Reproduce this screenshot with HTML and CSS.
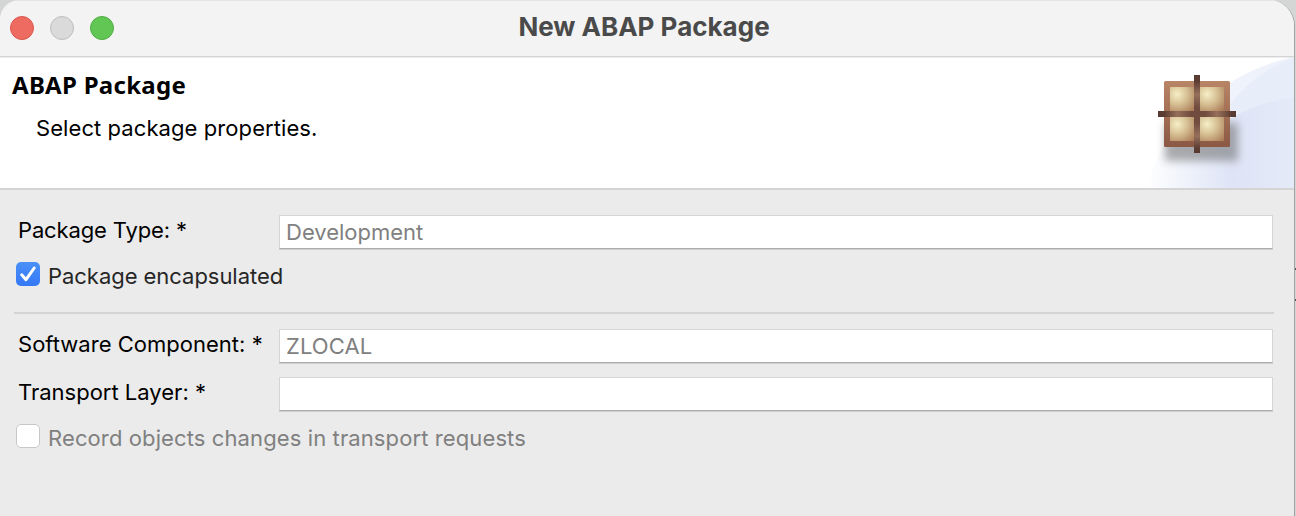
FILE: index.html
```html
<!DOCTYPE html>
<html lang="en">
<head>
<meta charset="utf-8">
<title>New ABAP Package</title>
<link rel="stylesheet" href="styles.css">
</head>
<body>
<div class="backdrop">
<div class="window">
  <header class="titlebar">
    <div class="lights"><i class="light close"></i><i class="light minimize"></i><i class="light maximize"></i></div>
    <h1 class="title">New ABAP Package</h1>
  </header>
  <section class="banner">
    <div class="intro">
      <h2 class="heading">ABAP Package</h2>
      <p class="message">Select package properties.</p>
    </div>
    <svg class="art" width="164" height="130" viewBox="0 1 164 130">
      <defs>
        <linearGradient id="sweep" x1="0" x2="1" y1="0" y2="0"><stop offset="0" stop-color="#fff"/><stop offset=".58" stop-color="#dee4f6"/><stop offset="1" stop-color="#e5eaf8"/></linearGradient>
        <linearGradient id="sky" x1="0" x2="1" y1="0" y2="0"><stop offset="0" stop-color="#f4f6fc"/><stop offset="1" stop-color="#edf1fb"/></linearGradient>
        <linearGradient id="frame" x1="0" x2="0" y1="0" y2="1"><stop offset="0" stop-color="#b88566"/><stop offset="1" stop-color="#8b5844"/></linearGradient>
        <radialGradient id="pane" cx=".3" cy=".3" r=".9"><stop offset="0" stop-color="#f6efc7"/><stop offset=".45" stop-color="#d8c296"/><stop offset="1" stop-color="#ad805b"/></radialGradient>
        <linearGradient id="strapX" gradientUnits="userSpaceOnUse" x1="28" x2="106" y1="0" y2="0"><stop offset="0" stop-color="#563a30"/><stop offset=".08" stop-color="#5c3d32"/><stop offset=".25" stop-color="#956f5a"/><stop offset=".42" stop-color="#704b3e"/><stop offset=".6" stop-color="#704b3e"/><stop offset=".76" stop-color="#956f5a"/><stop offset=".94" stop-color="#5c3d32"/><stop offset="1" stop-color="#563a30"/></linearGradient>
        <linearGradient id="strapY" gradientUnits="userSpaceOnUse" x1="0" x2="0" y1="18" y2="96"><stop offset="0" stop-color="#563a30"/><stop offset=".08" stop-color="#5c3d32"/><stop offset=".25" stop-color="#956f5a"/><stop offset=".42" stop-color="#704b3e"/><stop offset=".6" stop-color="#704b3e"/><stop offset=".78" stop-color="#956f5a"/><stop offset=".94" stop-color="#5c3d32"/><stop offset="1" stop-color="#563a30"/></linearGradient>
        <filter id="blur" x="-30%" y="-30%" width="160%" height="160%"><feGaussianBlur stdDeviation="4"/></filter>
      </defs>
      <path fill="url(#sky)" d="M16 131C34 72 88 16 164 0V131Z"/>
      <path fill="#e8edfa" d="M92 60C106 34 134 11 164 1V60Z"/>
      <path fill="url(#sweep)" d="M16 131C24 106 34 82 52 66L100 62C120 50 142 43 164 41V131Z"/>
      <path fill="#6c6c6c" opacity=".55" filter="url(#blur)" d="M35 66H108V104H35Z"/>
      <rect x="34" y="24" width="66" height="66" rx="1.5" fill="url(#frame)"/>
      <g fill="url(#pane)"><rect x="40" y="30" width="24" height="24"/><rect x="70" y="30" width="24" height="24"/><rect x="40" y="60" width="24" height="24"/><rect x="70" y="60" width="24" height="24"/></g>
      <rect x="28" y="54" width="78" height="6" fill="url(#strapX)"/>
      <rect x="64" y="18" width="6" height="78" fill="url(#strapY)"/>
    </svg>
  </section>
  <main class="form">
    <div class="row"><span class="label type">Package Type: *</span><div class="field"><span class="dev">Development</span></div></div>
    <div class="check first"><span class="box checked"><svg width="24" height="24" viewBox="0 0 24 24"><path d="M5.7 12.8 10 17.7 18.2 6" fill="none" stroke="#fff" stroke-width="3" stroke-linecap="round" stroke-linejoin="round"/></svg></span><span class="caption encapsulated">Package encapsulated</span></div>
    <div class="separator"></div>
    <div class="row"><span class="label component">Software Component: *</span><div class="field"><span class="local">ZLOCAL</span></div></div>
    <div class="row last"><span class="label layer">Transport Layer: *</span><div class="field"></div></div>
    <div class="check disabled"><span class="box"></span><span class="caption record">Record objects changes in transport requests</span></div>
  </main>
</div>
</div>
</body>
</html>
```
FILE: styles.css
```css
* { box-sizing: border-box; }
body { margin: 0; font-family: Inter, "Liberation Sans", sans-serif; font-size: 22px; color: #000; }
.backdrop { height: 516px; overflow: hidden; padding-right: 1px; background: linear-gradient(#555, #555) 100% 268px / 1px 2px no-repeat, linear-gradient(#555, #555) 100% 299px / 1px 2px no-repeat, #d4d6d5; }
.window { height: 516px; border-right: 1px solid #a2a2a2; border-radius: 20px 26px 0 0; overflow: hidden; background: #ebebeb; display: flex; flex-direction: column; }
.titlebar { height: 58px; flex: none; display: grid; grid-template-columns: 1fr auto 1fr; align-items: start; background: #f3f3f3; border-top: 1px solid #e4e4e4; border-bottom: 1px solid #ececec; box-shadow: inset 0 -1px #d4d4d4; }
.lights { display: flex; gap: 16px; padding: 15px 0 0 10px; }
.light { width: 24px; height: 24px; border-radius: 50%; border: 1px solid; }
.close { background: #ed6b60; border-color: #d9574d; }
.minimize { background: #dadada; border-color: #bdbdbd; }
.maximize { background: #62c655; border-color: #50ad43; }
.title { margin: 0; padding: 10px 6px 0 0; line-height: 32px; font-size: 26px; font-weight: 700; color: #4a4a4a; }
.banner { height: 132px; flex: none; display: flex; justify-content: space-between; background: #fff; border-bottom: 2px solid #d4d4d4; }
.intro { padding: 12px 0 0 12px; }
.heading { margin: 0; font: 700 24px/30px "Noto Sans", sans-serif; letter-spacing: .27px; }
.message { margin: 12px 0 0 24px; line-height: 32px; letter-spacing: .08px; white-space: nowrap; }
.art { flex: none; }
.form { padding: 25px 20px 0 14px; }
.row { display: flex; height: 35px; padding-right: 1px; }
.last { margin-top: 13px; }
.label { width: 265px; flex: none; padding-left: 4px; line-height: 30px; white-space: nowrap; }
.type { letter-spacing: -.14px; }
.component { letter-spacing: .02px; }
.field { flex: 1; height: 34px; background: #fff; border: 1px solid #d5d5d5; border-bottom-color: #adadad; box-shadow: 0 1px #cfcfcf; padding-left: 6px; line-height: 33px; color: #808080; }
.local { letter-spacing: .1px; }
.check { display: flex; gap: 8px; padding-left: 2px; margin-top: 12px; height: 28px; }
.box { width: 24px; height: 24px; flex: none; border-radius: 5px; background: #fff; border: 1px solid #c8c8c8; }
.checked { border: 0; background: linear-gradient(#4b91f8, #3478f6); }
.checked svg { display: block; }
.caption { line-height: 28px; color: #262626; white-space: nowrap; }
.encapsulated { letter-spacing: -.04px; }
.record { letter-spacing: .11px; }
.disabled .caption { color: #808080; }
.separator { height: 2px; margin: 22px 0 15px; background: #d4d4d4; }
```
